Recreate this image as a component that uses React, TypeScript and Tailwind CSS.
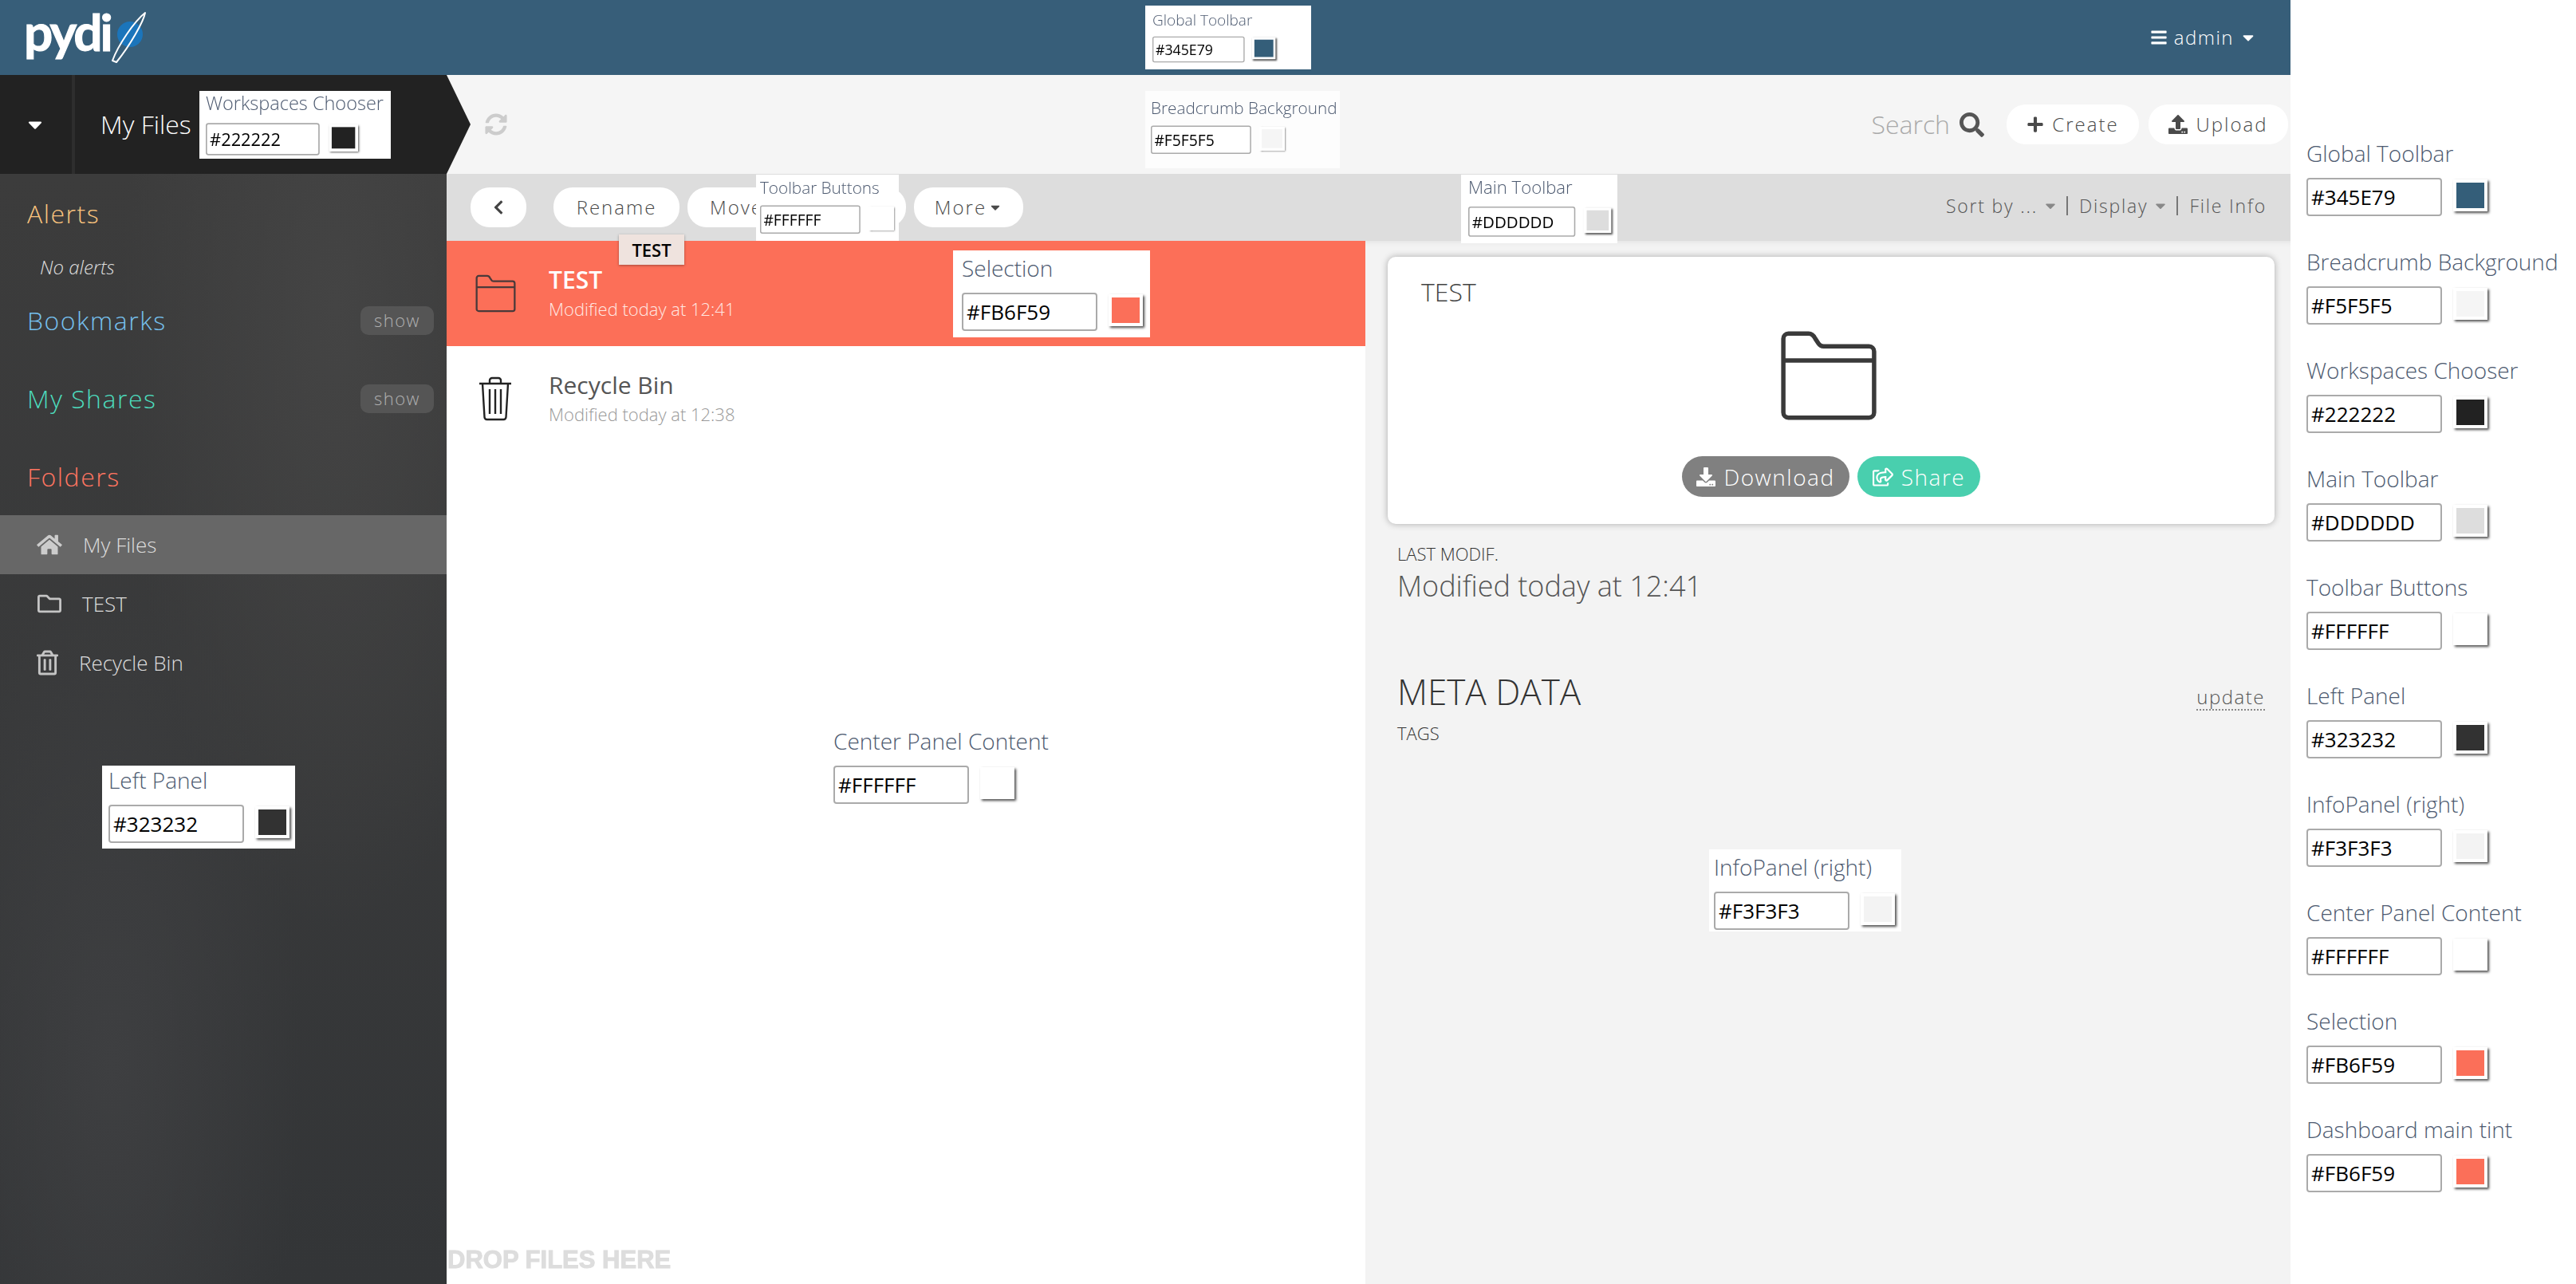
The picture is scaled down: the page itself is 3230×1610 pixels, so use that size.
import {
  FaBars,
  FaCaretDown,
  FaChevronLeft,
  FaDownload,
  FaHome,
  FaPlus,
  FaRegFolder,
  FaRegShareSquare,
  FaRegTrashAlt,
  FaSearch,
  FaSyncAlt,
  FaUpload,
} from "react-icons/fa";

const swatches = [
  { label: "Global Toolbar", value: "#345E79", color: "bg-[#345E79]" },
  { label: "Breadcrumb Background", value: "#F5F5F5", color: "bg-[#F5F5F5]" },
  { label: "Workspaces Chooser", value: "#222222", color: "bg-[#222222]" },
  { label: "Main Toolbar", value: "#DDDDDD", color: "bg-[#DDDDDD]" },
  { label: "Toolbar Buttons", value: "#FFFFFF", color: "bg-[#FFFFFF]" },
  { label: "Left Panel", value: "#323232", color: "bg-[#323232]" },
  { label: "InfoPanel (right)", value: "#F3F3F3", color: "bg-[#F3F3F3]" },
  { label: "Center Panel Content", value: "#FFFFFF", color: "bg-[#FFFFFF]" },
  { label: "Selection", value: "#FB6F59", color: "bg-[#FB6F59]" },
  { label: "Dashboard main tint", value: "#FB6F59", color: "bg-[#FB6F59]" },
];

function ColorField({ label, value, color }: { label: string; value: string; color: string }) {
  return (
    <div className="w-[330px]">
      <div className="h-[34px] text-[28px] leading-[34px] font-light text-[#4d5a70] whitespace-nowrap">{label}</div>
      <div className="mt-[14px] flex items-start gap-[14px]">
        <div className="w-[170px] h-[48px] border-[2px] border-[#aaaaaa] rounded-[4px] bg-white pl-[4px] text-[26px] leading-[44px] text-black">
          {value}
        </div>
        <div className="mt-[2px] w-[43px] h-[40px] border-[4px] border-white shadow-[2px_2px_3px_rgba(0,0,0,0.7)]">
          <div className={`w-full h-full ${color}`} />
        </div>
      </div>
    </div>
  );
}

function Overlay({
  box,
  inner,
  label,
  value,
  color,
}: {
  box: string;
  inner: string;
  label: string;
  value: string;
  color: string;
}) {
  return (
    <div className={`absolute ${box}`}>
      <div className={`absolute origin-top-left ${inner}`}>
        <ColorField label={label} value={value} color={color} />
      </div>
    </div>
  );
}

function PillButton({ className, children }: { className: string; children: React.ReactNode }) {
  return (
    <div
      className={`h-[50px] rounded-[24px] bg-white flex items-center justify-center text-[24px] font-light tracking-[2px] text-[#4a4a4a] ${className}`}
    >
      {children}
    </div>
  );
}

function FolderGlyph({ className }: { className: string }) {
  return (
    <svg viewBox="0 0 60 56" fill="none" stroke="currentColor" strokeWidth="2.6" strokeLinejoin="round" className={className}>
      <path d="M3 6a3 3 0 0 1 3-3h12c2 0 3 1 4 3l2 3c.6 1 1.4 1.6 3 1.6h27a3 3 0 0 1 3 3V50a3 3 0 0 1-3 3H6a3 3 0 0 1-3-3z" />
      <path d="M3 19h54" />
    </svg>
  );
}

function SectionTitle({ className, children }: { className: string; children: React.ReactNode }) {
  return <div className={`pl-[34px] text-[32px] leading-[40px] font-light tracking-[1.5px] ${className}`}>{children}</div>;
}

function ShowBadge() {
  return (
    <div className="w-[92px] h-[36px] rounded-[10px] bg-[#555555] text-center text-[22px] leading-[34px] font-light tracking-[1.5px] text-[#b0b0b0]">
      show
    </div>
  );
}

function Sidebar() {
  return (
    <div className="flex-1 pt-[30px] bg-[radial-gradient(ellipse_at_75%_12%,#444444_0%,transparent_45%),radial-gradient(ellipse_at_25%_80%,#3e3f41_0%,transparent_40%),linear-gradient(to_bottom,#3c3c3c,#38393a_50%,#333537)] text-[#dddddd]">
      <SectionTitle className="text-[#fac47e]">Alerts</SectionTitle>
      <div className="mt-[29px] pl-[50px] h-[36px] text-[24px] leading-[36px] font-light italic">No alerts</div>
      <div className="mt-[29px] flex items-center justify-between pr-[16px] h-[40px]">
        <SectionTitle className="text-[#76c0ee]">Bookmarks</SectionTitle>
        <ShowBadge />
      </div>
      <div className="mt-[58px] flex items-center justify-between pr-[16px] h-[40px]">
        <SectionTitle className="text-[#4ddcbd]">My Shares</SectionTitle>
        <ShowBadge />
      </div>
      <SectionTitle className="mt-[58px] text-[#ff7561]">Folders</SectionTitle>
      <div className="mt-[28px] h-[74px] bg-[#676767] flex items-center pl-[46px] gap-[26px] text-[26px] font-light">
        <FaHome className="w-[32px] h-[28px] text-[#cccccc]" />
        My Files
      </div>
      <div className="h-[74px] flex items-center pl-[46px] gap-[25px] text-[26px] font-light">
        <FaRegFolder className="w-[32px] h-[30px] text-[#c4c4c4]" />
        TEST
      </div>
      <div className="h-[74px] flex items-center pl-[46px] gap-[26px] text-[26px] font-light">
        <FaRegTrashAlt className="w-[27px] h-[32px] text-[#c4c4c4]" />
        Recycle Bin
      </div>
    </div>
  );
}

export default function App() {
  return (
    <div className="relative w-[3230px] h-[1610px] overflow-hidden flex bg-white font-['Open_Sans',sans-serif]">
      <div className="w-[2872px] flex flex-col">
        {/* global toolbar */}
        <header className="h-[94px] bg-[#375E79] flex items-center justify-between pl-[30px] pr-[42px] text-white">
          <div className="relative h-[94px] w-[170px] pt-[3px]">
            <span className="block text-[64px] leading-[74px] font-['Lato',sans-serif] tracking-[-3px] font-bold [-webkit-text-stroke:1px_white]">pydi</span>
            <svg viewBox="0 0 60 70" className="absolute left-[108px] top-[12px] w-[60px] h-[70px]" fill="none">
              <circle cx="25" cy="31" r="16" fill="#1b75bb" />
              <path d="M3 64C10 45 30 15 44 4C42 15 25 45 8 66Z" stroke="white" strokeWidth="2" strokeLinejoin="round" />
            </svg>
          </div>
          <div className="flex items-center gap-[7px] text-[24px] tracking-[1.5px] font-light">
            <FaBars className="w-[24px] h-[22px]" />
            admin
            <FaCaretDown className="w-[22px] h-[22px]" />
          </div>
        </header>

        <div className="flex-1 flex min-h-0">
          {/* left column */}
          <div className="w-[560px] flex flex-col">
            <div className="relative h-[124px] bg-[#222222] flex items-center text-white">
              <div className="w-[94px] h-full border-r-[4px] border-[#2e2e2e] flex items-center justify-center pr-[2px]">
                <FaCaretDown className="w-[28px] h-[28px]" />
              </div>
              <span className="ml-[32px] text-[32px] font-light">My Files</span>
              <svg viewBox="0 0 30 124" className="absolute left-[560px] top-0 w-[30px] h-[124px]">
                <path d="M0 0 L30 62 L0 124 Z" fill="#222222" />
              </svg>
            </div>
            <Sidebar />
          </div>

          {/* center and right */}
          <div className="flex-1 flex flex-col min-w-0">
            <div className="h-[124px] bg-[#F5F5F5] flex items-center pl-[48px] pr-[3px]">
              <FaSyncAlt className="w-[28px] h-[28px] text-[#cccccc]" />
              <div className="ml-auto flex items-center text-[32px] font-light text-[#aaaaaa]">
                Search
                <FaSearch className="ml-[12px] w-[31px] h-[31px] text-[#555555]" />
              </div>
              <PillButton className="ml-[28px] w-[166px] gap-[10px]">
                <FaPlus className="w-[22px] h-[22px]" />
                Create
              </PillButton>
              <PillButton className="ml-[12px] w-[175px] gap-[10px]">
                <FaUpload className="w-[24px] h-[24px]" />
                Upload
              </PillButton>
            </div>

            <div className="h-[84px] bg-[#DDDDDD] flex items-center pl-[30px] pr-[30px]">
              <PillButton className="w-[70px]">
                <FaChevronLeft className="w-[20px] h-[20px] text-[#444444]" />
              </PillButton>
              <PillButton className="ml-[34px] w-[158px]">Rename</PillButton>
              <PillButton className="ml-[10px] w-[274px] justify-start pl-[28px]">Move</PillButton>
              <PillButton className="ml-[10px] w-[137px] gap-[2px]">
                More
                <FaCaretDown className="w-[18px] h-[18px]" />
              </PillButton>
              <div className="ml-auto -mt-[4px] flex items-center text-[23px] font-light tracking-[1.8px] text-[#555555]">
                Sort by ...
                <FaCaretDown className="ml-[6px] w-[20px] h-[20px] text-[#888888]" />
                <span className="ml-[10px] mr-[14px] w-[2px] h-[24px] bg-[#777777]" />
                Display
                <FaCaretDown className="ml-[6px] w-[20px] h-[20px] text-[#888888]" />
                <span className="ml-[10px] mr-[14px] w-[2px] h-[24px] bg-[#777777]" />
                File Info
              </div>
            </div>

            <div className="flex-1 flex min-h-0">
              {/* file list */}
              <div className="relative w-[1152px] bg-white">
                <div className="h-[132px] flex items-center pl-[35px] gap-[40px] text-white bg-[#FC6F58]">
                  <FolderGlyph className="w-[53px] h-[50px] text-[#4a3a3a] shrink-0" />
                  <div className="-mt-[3px]">
                    <div className="text-[30px] leading-[38px] font-semibold">TEST</div>
                    <div className="mt-[2px] text-[22px] leading-[30px] font-light text-[#ffe9e4]">Modified today at 12:41</div>
                  </div>
                </div>
                <div className="h-[132px] flex items-center pl-[40px] gap-[46px]">
                  <svg viewBox="0 0 42 56" fill="none" stroke="#222222" strokeWidth="2.4" className="w-[42px] h-[56px] shrink-0">
                    <path d="M1 9h40M14 9V5a3 3 0 0 1 3-3h8a3 3 0 0 1 3 3v4" />
                    <path d="M5 9l2.5 42a3 3 0 0 0 3 3h21a3 3 0 0 0 3-3L37 9" />
                    <path d="M14 16v31M21 16v31M28 16v31" />
                  </svg>
                  <div className="-mt-[3px]">
                    <div className="text-[30px] leading-[38px] text-[#555555]">Recycle Bin</div>
                    <div className="mt-[2px] text-[22px] leading-[30px] font-light text-[#999999]">Modified today at 12:38</div>
                  </div>
                </div>
                <div className="absolute left-[1px] bottom-[13px] text-[31px] leading-[34px] font-bold font-['Liberation_Sans',sans-serif] text-[#dddddd] blur-[0.6px] [-webkit-text-stroke:1px_#dddddd]">
                  DROP FILES HERE
                </div>
              </div>

              {/* info panel */}
              <div className="flex-1 bg-[#F3F3F3] shadow-[inset_0_8px_8px_-8px_rgba(0,0,0,0.1)] pt-[20px] pl-[28px] pr-[20px]">
                <div className="h-[335px] rounded-[10px] bg-white shadow-[0_0_8px_rgba(0,0,0,0.3)] flex flex-col items-center relative">
                  <div className="self-start ml-[42px] mt-[22px] text-[32px] leading-[44px] font-light text-[#444444]">TEST</div>
                  <FolderGlyph className="mt-[24px] mr-[6px] w-[128px] h-[118px] text-[#3a3a3a]" />
                  <div className="mt-[42px] flex gap-[10px] text-white text-[28px] font-light tracking-[1.5px]">
                    <div className="h-[51px] w-[210px] rounded-[26px] bg-[#808080] flex items-center justify-center gap-[10px]">
                      <FaDownload className="w-[24px] h-[24px]" />
                      Download
                    </div>
                    <div className="h-[51px] w-[154px] rounded-[26px] bg-[#49CFAE] flex items-center justify-center gap-[10px]">
                      <FaRegShareSquare className="w-[26px] h-[26px]" />
                      Share
                    </div>
                  </div>
                </div>
                <div className="ml-[12px] mt-[22px] text-[22px] leading-[30px] font-light text-[#333333]">LAST MODIF.</div>
                <div className="ml-[12px] mt-[4px] text-[36px] leading-[44px] font-light text-[#555555]">Modified today at 12:41</div>
                <div className="ml-[12px] mt-[82px] flex items-end justify-between pr-[12px] h-[56px]">
                  <span className="text-[44px] leading-[56px] font-light text-[#333333]">META DATA</span>
                  <span className="text-[24px] leading-[30px] tracking-[1.5px] font-light text-[#555555] border-b-[2px] border-dotted border-[#888888] mb-[4px]">update</span>
                </div>
                <div className="ml-[12px] mt-[9px] text-[22px] leading-[30px] font-light text-[#333333]">TAGS</div>
              </div>
            </div>
          </div>
        </div>
      </div>

      {/* settings column */}
      <aside className="w-[358px] pl-[20px] pt-[175px] flex flex-col gap-[40px] bg-white">
        {swatches.map((s) => (
          <ColorField key={s.label} label={s.label} value={s.value} color={s.color} />
        ))}
      </aside>

      {/* tooltip */}
      <div className="absolute left-[776px] top-[294px] w-[82px] h-[38px] bg-[#efe3de] shadow-[0_1px_3px_rgba(0,0,0,0.35)] text-center text-[22px] leading-[38px] font-semibold text-black">
        TEST
      </div>

      {/* pickers dropped over the page */}
      <Overlay box="left-[1436px] top-[7px] w-[208px] h-[80px] bg-white" inner="left-[9px] top-[6px] scale-[0.68]" label="Global Toolbar" value="#345E79" color="bg-[#345E79]" />
      <Overlay box="left-[1436px] top-[114px] w-[244px] h-[97px] bg-[#fdfdfd]" inner="left-[7px] top-[8px] scale-[0.74]" label="Breadcrumb Background" value="#F5F5F5" color="bg-[#F5F5F5]" />
      <Overlay box="left-[250px] top-[114px] w-[240px] h-[85px] bg-white" inner="left-[8px] top-0 scale-[0.84]" label="Workspaces Chooser" value="#222222" color="bg-[#222222]" />
      <Overlay box="left-[948px] top-[219px] w-[179px] h-[83px] bg-white" inner="left-[5px] top-[3px] scale-[0.74]" label="Toolbar Buttons" value="#FFFFFF" color="bg-[#FFFFFF]" />
      <Overlay box="left-[1832px] top-[219px] w-[196px] h-[86px] bg-white" inner="left-[9px] top-[2px] scale-[0.79]" label="Main Toolbar" value="#DDDDDD" color="bg-[#DDDDDD]" />
      <Overlay box="left-[1195px] top-[314px] w-[247px] h-[109px] bg-white" inner="left-[11px] top-[5px] scale-100" label="Selection" value="#FB6F59" color="bg-[#FB6F59]" />
      <Overlay box="left-[128px] top-[960px] w-[242px] h-[104px] bg-white" inner="left-[8px] top-[1px] scale-100" label="Left Panel" value="#323232" color="bg-[#323232]" />
      <Overlay box="left-[1040px] top-[905px] w-[290px] h-[110px] bg-white" inner="left-[5px] top-[7px] scale-100" label="Center Panel Content" value="#FFFFFF" color="bg-[#FFFFFF]" />
      <Overlay box="left-[2143px] top-[1065px] w-[241px] h-[103px] bg-white" inner="left-[6px] top-[5px] scale-100" label="InfoPanel (right)" value="#F3F3F3" color="bg-[#F3F3F3]" />
    </div>
  );
}
